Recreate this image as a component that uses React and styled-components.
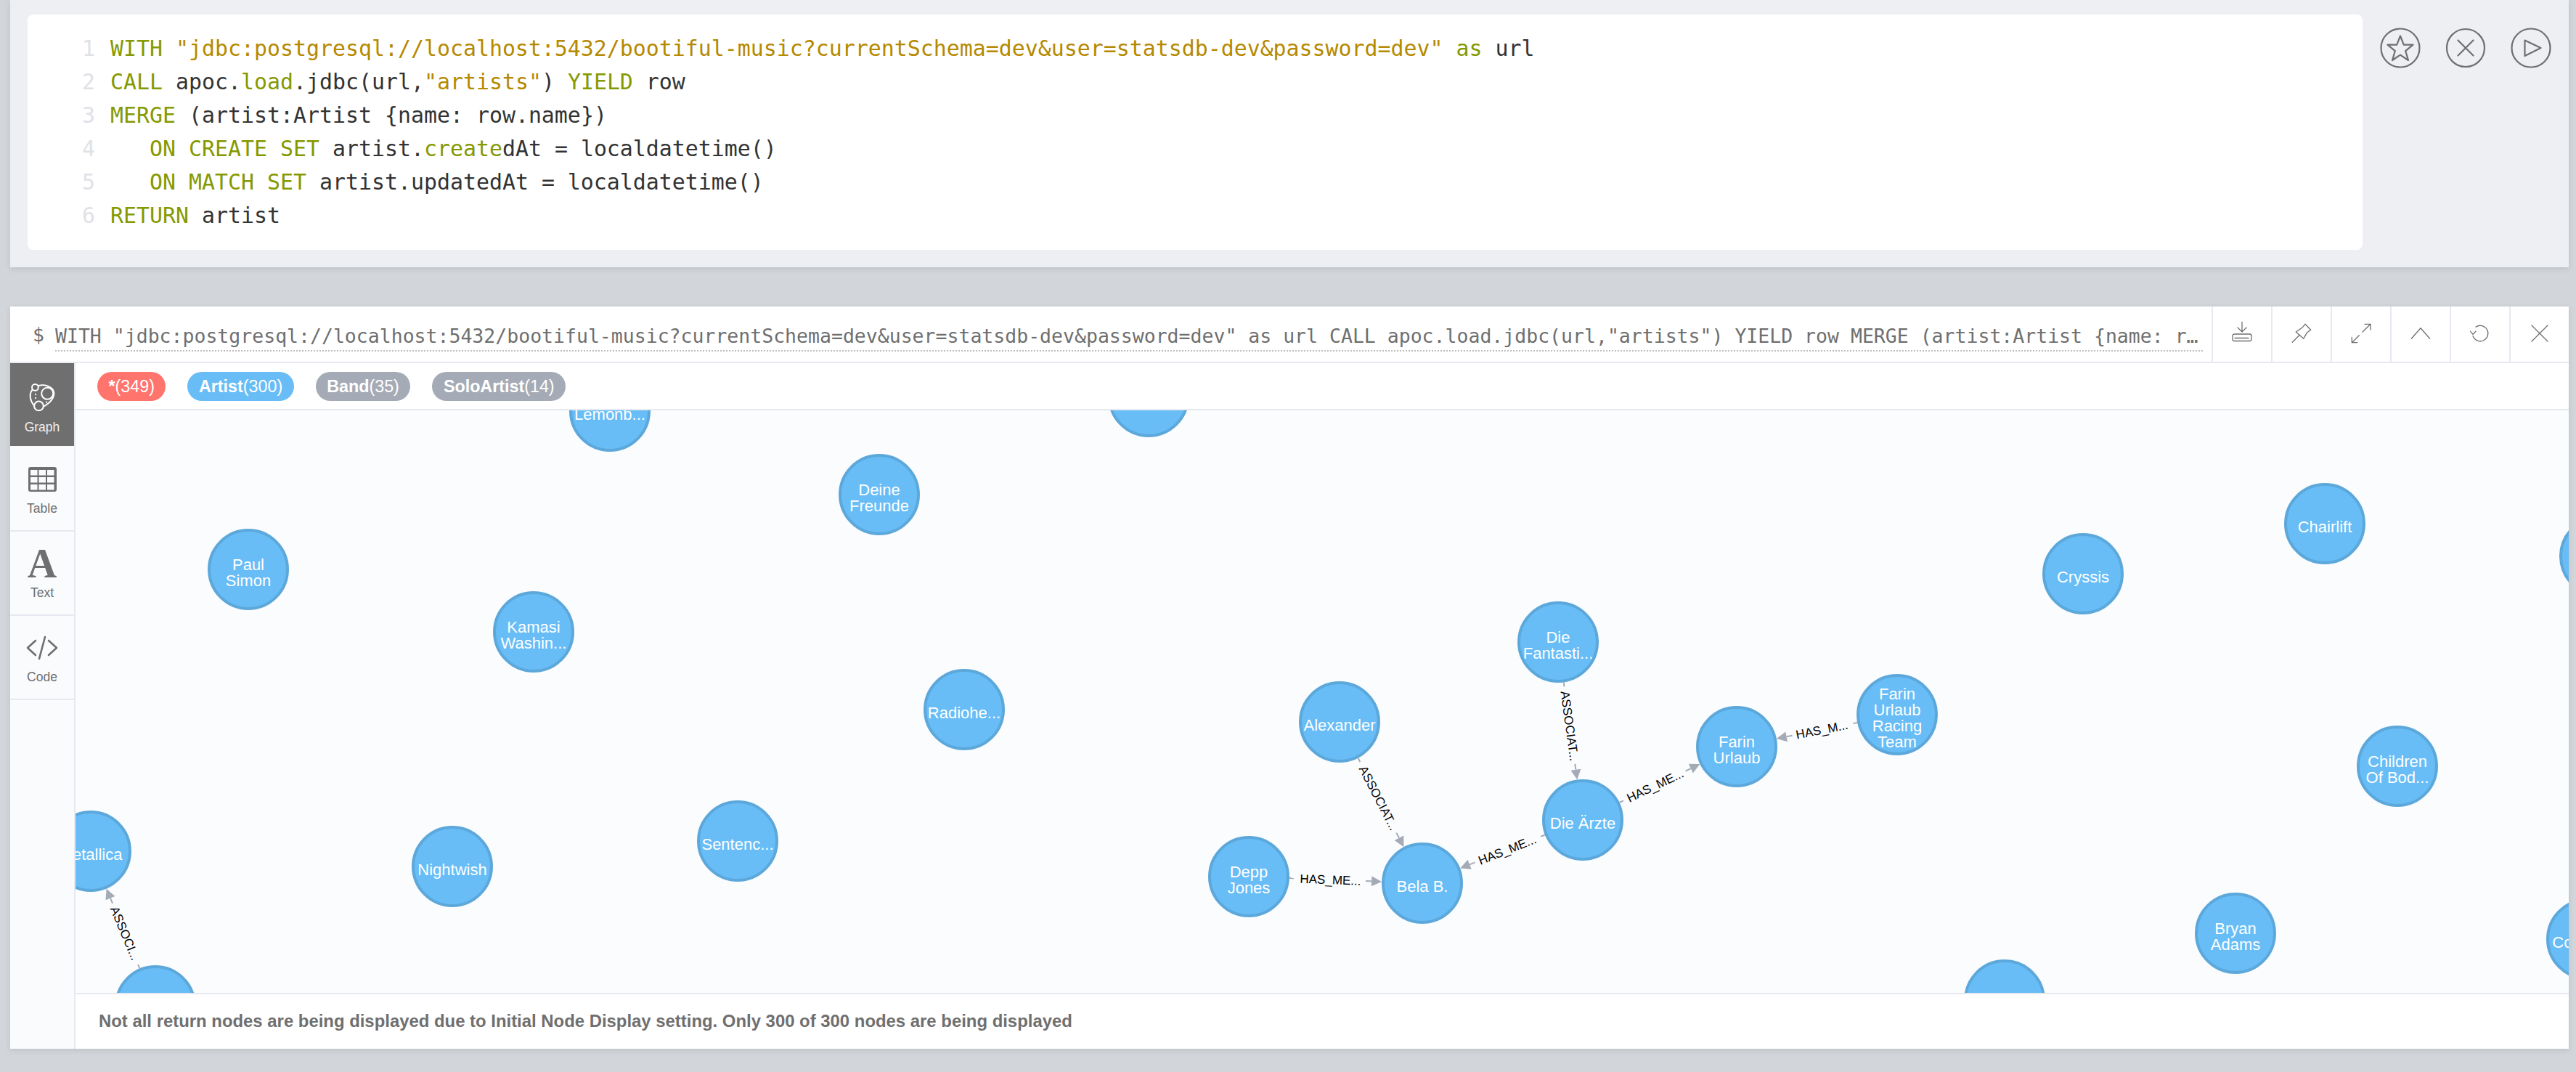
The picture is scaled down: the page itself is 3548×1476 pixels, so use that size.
import React from "react";
import styled, { createGlobalStyle } from "styled-components";

const GREY = "#6f6f6f";
const LINE = "#e6e9ef";
const MONO = `"DejaVu Sans Mono", "Liberation Mono", monospace`;
const SANS = `"Liberation Sans", Arial, sans-serif`;

const QUERY =
  'WITH "jdbc:postgresql://localhost:5432/bootiful-music?currentSchema=dev&user=statsdb-dev&password=dev" as url CALL apoc.load.jdbc(url,"artists") YIELD row MERGE (artist:Artist {name: row.name}) ON CREATE SET artist.createdAt = localdatetime() ON MATCH SET artist.updatedAt = localdatetime() RETURN artist';

const NODES = {
  lemon: { x: 840, y: 566, lines: ["Lemonb..."] },
  top: { x: 1582, y: 546, lines: [] },
  deine: { x: 1211, y: 681, lines: ["Deine", "Freunde"] },
  paul: { x: 342, y: 784, lines: ["Paul", "Simon"] },
  kamasi: { x: 735, y: 870, lines: ["Kamasi", "Washin..."] },
  radio: { x: 1328, y: 977, lines: ["Radiohe..."] },
  metallica: { x: 125, y: 1172, lines: ["Metallica"] },
  nightwish: { x: 623, y: 1193, lines: ["Nightwish"] },
  sentenc: { x: 1016, y: 1158, lines: ["Sentenc..."] },
  bottomLeft: { x: 214, y: 1385, lines: [] },
  alexander: { x: 1845, y: 994, lines: ["Alexander"] },
  depp: { x: 1720, y: 1207, lines: ["Depp", "Jones"] },
  bela: { x: 1959, y: 1216, lines: ["Bela B."] },
  fantasti: { x: 2146, y: 884, lines: ["Die", "Fantasti..."] },
  aerzte: { x: 2180, y: 1129, lines: ["Die Ärzte"] },
  farin: { x: 2392, y: 1028, lines: ["Farin", "Urlaub"] },
  racing: { x: 2613, y: 984, lines: ["Farin", "Urlaub", "Racing", "Team"] },
  cryssis: { x: 2869, y: 790, lines: ["Cryssis"] },
  chairlift: { x: 3202, y: 721, lines: ["Chairlift"] },
  children: { x: 3302, y: 1055, lines: ["Children", "Of Bod..."] },
  bryan: { x: 3079, y: 1285, lines: ["Bryan", "Adams"] },
  bottomMid: { x: 2761, y: 1377, lines: [] },
  converge: { x: 3563, y: 1293, lines: ["Converge"] },
  edge: { x: 3581, y: 766, lines: [] },
};

const EDGES = [
  { from: "alexander", to: "bela", label: "ASSOCIAT..." },
  { from: "fantasti", to: "aerzte", label: "ASSOCIAT..." },
  { from: "depp", to: "bela", label: "HAS_ME..." },
  { from: "aerzte", to: "bela", label: "HAS_ME..." },
  { from: "aerzte", to: "farin", label: "HAS_ME..." },
  { from: "racing", to: "farin", label: "HAS_M..." },
  { from: "bottomLeft", to: "metallica", label: "ASSOCI..." },
];

const GlobalStyle = createGlobalStyle`
  html, body {
    margin: 0;
    padding: 0;
    background: #d2d5da;
  }
  body {
    font-family: ${SANS};
  }
`;

const Stream = styled.div`
  width: 3548px;
  height: 1476px;
  padding: 0 10px 0 14px;
  box-sizing: border-box;
  overflow: hidden;
`;

const Editor = styled.section`
  display: flex;
  align-items: flex-start;
  height: 368px;
  padding: 20px 0 0 24px;
  box-sizing: border-box;
  background: #eeeff3;
  box-shadow: 0 2px 8px rgba(0, 0, 0, 0.1);
`;

const CodeCard = styled.div`
  width: 3216px;
  height: 324px;
  padding-top: 24px;
  box-sizing: border-box;
  background: #fff;
  border-radius: 8px;
  font-family: ${MONO};
  font-size: 29.9px;
  line-height: 46px;
  color: #333;
`;

const CodeLine = styled.div`
  display: flex;
  height: 46px;
`;

const LineNo = styled.span`
  width: 93px;
  margin-right: 21px;
  text-align: right;
  color: #dfe1e6;
`;

const Code = styled.span`
  white-space: pre;
`;

const Kw = styled.span`
  color: #859900;
`;

const Str = styled.span`
  color: #b58900;
`;

const EditorActions = styled.div`
  display: flex;
  gap: 34px;
  margin: 18px 0 0 24px;
`;

const RoundIcon = styled.svg`
  display: block;
  width: 56px;
  height: 56px;
  fill: none;
  stroke: ${GREY};
  stroke-width: 2.2;
  stroke-linejoin: round;
  stroke-linecap: round;
`;

const Frame = styled.section`
  display: flex;
  flex-direction: column;
  height: 1022px;
  margin-top: 54px;
  background: #fff;
  box-shadow: 0 2px 8px rgba(0, 0, 0, 0.1);
`;

const FrameHeader = styled.header`
  display: flex;
  height: 78px;
  flex: none;
  box-sizing: border-box;
  border-bottom: 2px solid ${LINE};
  color: ${GREY};
  font-family: ${MONO};
  font-size: 26.5px;
`;

const Dollar = styled.span`
  flex: none;
  width: 31px;
  margin-left: 31px;
  line-height: 78px;
  height: 76px;
`;

const Query = styled.div`
  flex: 1;
  min-width: 0;
  height: 39px;
  margin: 21px 12px 0 0;
  line-height: 40px;
  border-bottom: 2px dotted #bdbdbd;
  white-space: nowrap;
  overflow: hidden;
  text-overflow: ellipsis;
`;

const HeaderButton = styled.div`
  display: flex;
  align-items: center;
  justify-content: center;
  flex: none;
  width: 80px;
  border-left: 2px solid ${LINE};
  padding-bottom: 2px;
`;

const ThinIcon = styled.svg`
  display: block;
  width: 40px;
  height: 40px;
  fill: none;
  stroke: ${GREY};
  stroke-width: 1.3;
  stroke-linejoin: round;
  stroke-linecap: round;
`;

const FrameBody = styled.div`
  display: flex;
  flex: 1;
  min-height: 0;
`;

const Sidebar = styled.nav`
  flex: none;
  width: 90px;
  box-sizing: border-box;
  background: #f9fbfd;
  border-right: 2px solid ${LINE};
`;

const SideItem = styled.div`
  height: 116px;
  box-sizing: border-box;
  padding-top: 22px;
  text-align: center;
  font-size: 17.5px;
  line-height: 20px;
  color: ${({ $active }) => ($active ? "#f0f0f0" : GREY)};
  background: ${({ $active }) => ($active ? GREY : "transparent")};
  border-bottom: 2px solid ${({ $active }) => ($active ? "#f9fbfd" : LINE)};
`;

const IconSlot = styled.div`
  display: flex;
  align-items: center;
  justify-content: center;
  height: ${({ $tall }) => ($tall ? 48 : 44)}px;
  margin-bottom: 8px;
`;

const SerifA = styled.span`
  font-family: "Liberation Serif", serif;
  font-weight: 700;
  font-size: 56px;
  line-height: 44px;
  color: ${GREY};
`;

const Main = styled.div`
  display: flex;
  flex-direction: column;
  flex: 1;
  min-width: 0;
`;

const Legend = styled.div`
  display: flex;
  gap: 30px;
  flex: none;
  height: 65px;
  padding: 12px 0 0 30px;
  box-sizing: border-box;
  border-bottom: 2px solid ${LINE};
`;

const Pill = styled.span`
  height: 40px;
  padding: 0 15.5px;
  border-radius: 20px;
  background: ${({ $color }) => $color};
  color: #fff;
  font-size: 23.3px;
  line-height: 40px;
`;

const PillName = styled.b`
  font-weight: 700;
`;

const Canvas = styled.div`
  flex: 1;
  min-height: 0;
  background: #fbfcfe;
  overflow: hidden;
`;

const GraphSvg = styled.svg`
  display: block;
  font-family: ${SANS};
`;

const Footer = styled.footer`
  flex: none;
  height: 77px;
  padding-left: 32px;
  box-sizing: border-box;
  border-top: 2px solid ${LINE};
  color: ${GREY};
  font-size: 23.9px;
  font-weight: 700;
  line-height: 74px;
`;

const R = 56;
const HEAD = 14;

const Node = ({ x, y, lines }) => (
  <g>
    <circle cx={x} cy={y} r={R - 2} fill="#68bdf6" stroke="#5ca8db" strokeWidth="4" />
    <text x={x} textAnchor="middle" fontSize="22" fill="#fff">
      {lines.map((line, i) => (
        <tspan key={i} x={x} y={y + 12 - 11 * (lines.length - 1) + 22 * i}>
          {line}
        </tspan>
      ))}
    </text>
  </g>
);

const Edge = ({ from, to, label }) => {
  const a = NODES[from];
  const b = NODES[to];
  const dist = Math.hypot(b.x - a.x, b.y - a.y);
  const ux = (b.x - a.x) / dist;
  const uy = (b.y - a.y) / dist;
  const sx = a.x + ux * R;
  const sy = a.y + uy * R;
  const tx = b.x - ux * R;
  const ty = b.y - uy * R;
  const bx = tx - ux * HEAD;
  const by = ty - uy * HEAD;
  const cx = (sx + bx) / 2;
  const cy = (sy + by) / 2;
  let angle = (Math.atan2(uy, ux) * 180) / Math.PI;
  if (ux < 0) angle += 180;
  return (
    <g>
      <line x1={sx} y1={sy} x2={sx + ux * 6} y2={sy + uy * 6} stroke="#a5abb6" strokeWidth="2" />
      <line x1={bx - ux * 8} y1={by - uy * 8} x2={bx} y2={by} stroke="#a5abb6" strokeWidth="2" />
      <polygon
        points={`${tx},${ty} ${bx - uy * 7},${by + ux * 7} ${bx + uy * 7},${by - ux * 7}`}
        fill="#a5abb6"
      />
      <text
        x={cx}
        y={cy + 6}
        textAnchor="middle"
        fontSize="17"
        fill="#000"
        transform={`rotate(${angle} ${cx} ${cy})`}
      >
        {label}
      </text>
    </g>
  );
};

const GraphIcon = () => (
  <svg width="37" height="41" viewBox="78 75 110 122" fill="none" stroke="#fff" strokeWidth="6" strokeLinecap="round">
    <circle cx="103" cy="97" r="13" />
    <circle cx="153" cy="122" r="24" />
    <circle cx="118" cy="173" r="19" />
    <path d="M117 90C140 84 175 92 180 118C182 140 165 160 137 176" />
    <path d="M99 172C88 158 80 140 84 122C85 116 88 111 92 106" />
    <path d="M105 125v1M105 140v1M150 157v1" />
  </svg>
);

const TableIcon = () => (
  <svg width="39" height="34" viewBox="0 0 39 34">
    <rect width="39" height="34" rx="3" fill={GREY} />
    {[3, 14.5, 26].map((x) =>
      [4, 14, 24].map((y) => <rect key={`${x}-${y}`} x={x} y={y} width="9.5" height="7.5" fill="#f9fbfd" />)
    )}
  </svg>
);

const CodeIcon = () => (
  <svg width="44" height="34" viewBox="0 0 44 34" fill="none" stroke={GREY} strokeWidth="2.6" strokeLinecap="round" strokeLinejoin="round">
    <path d="M13 7L2 17L13 27M31 7L42 17L31 27M26 2L18 32" />
  </svg>
);

const App = () => {
  return (
    <Stream>
      <GlobalStyle />
      <Editor>
        <CodeCard>
          <CodeLine>
            <LineNo>1</LineNo>
            <Code>
              <Kw>WITH</Kw>{" "}
              <Str>"jdbc:postgresql://localhost:5432/bootiful-music?currentSchema=dev&amp;user=statsdb-dev&amp;password=dev"</Str>{" "}
              <Kw>as</Kw> url
            </Code>
          </CodeLine>
          <CodeLine>
            <LineNo>2</LineNo>
            <Code>
              <Kw>CALL</Kw> apoc.<Kw>load</Kw>.jdbc(url,<Str>"artists"</Str>) <Kw>YIELD</Kw> row
            </Code>
          </CodeLine>
          <CodeLine>
            <LineNo>3</LineNo>
            <Code>
              <Kw>MERGE</Kw> (artist:Artist {"{"}name: row.name{"}"})
            </Code>
          </CodeLine>
          <CodeLine>
            <LineNo>4</LineNo>
            <Code>
              {"   "}
              <Kw>ON CREATE SET</Kw> artist.<Kw>create</Kw>dAt = localdatetime()
            </Code>
          </CodeLine>
          <CodeLine>
            <LineNo>5</LineNo>
            <Code>
              {"   "}
              <Kw>ON MATCH SET</Kw> artist.updatedAt = localdatetime()
            </Code>
          </CodeLine>
          <CodeLine>
            <LineNo>6</LineNo>
            <Code>
              <Kw>RETURN</Kw> artist
            </Code>
          </CodeLine>
        </CodeCard>
        <EditorActions>
          <RoundIcon viewBox="-28 -28 56 56">
            <circle r="26.5" />
            <path d="M0 -16.5L4.8 -4.4L17.5 -4.4L7.2 4.2L11 17L0 9.6L-11 17L-7.2 4.2L-17.5 -4.4L-4.8 -4.4Z" />
          </RoundIcon>
          <RoundIcon viewBox="-28 -28 56 56">
            <circle r="26" />
            <path d="M-10.5 -10.5L10.5 10.5M10.5 -10.5L-10.5 10.5" />
          </RoundIcon>
          <RoundIcon viewBox="-28 -28 56 56">
            <circle r="26.5" />
            <path d="M-8.5 -10.5L13.5 0L-8.5 11Z" />
          </RoundIcon>
        </EditorActions>
      </Editor>

      <Frame>
        <FrameHeader>
          <Dollar>$</Dollar>
          <Query>{QUERY}</Query>
          <HeaderButton>
            <ThinIcon viewBox="-20 -20 40 40">
              <path d="M0 -15.5V-2M-6 -8L0 -2L6 -8" />
              <rect x="-13" y="1" width="26" height="9.5" rx="2.5" />
              <path d="M-10 6.5H9" />
            </ThinIcon>
          </HeaderButton>
          <HeaderButton>
            <ThinIcon viewBox="-20 -20 40 40">
              <path d="M5 -12.7L12.7 -4.7L7.7 -1.3L2.7 7.3L-7.7 -2L0.7 -7.7Z" />
              <path d="M-12.7 12.3L-2.7 2.3" />
            </ThinIcon>
          </HeaderButton>
          <HeaderButton>
            <ThinIcon viewBox="-20 -20 40 40">
              <path d="M2 -2L13 -12.7M5 -12.7H13V-5" />
              <path d="M-2.7 2.7L-12.7 12.7M-12.7 5.3V12.7H-5.3" />
            </ThinIcon>
          </HeaderButton>
          <HeaderButton>
            <ThinIcon viewBox="-20 -20 40 40">
              <path d="M-12.7 7.3L0 -7.3L12.7 7.3" />
            </ThinIcon>
          </HeaderButton>
          <HeaderButton>
            <ThinIcon viewBox="-20 -20 40 40">
              <path d="M-6 -8.8A10.7 10.7 0 1 1 -10 3.5" />
              <path d="M-13.3 -2.7L-10 1.3L-6 -2.7" />
            </ThinIcon>
          </HeaderButton>
          <HeaderButton>
            <ThinIcon viewBox="-20 -20 40 40">
              <path d="M-11 -11L11 11M11 -11L-11 11" />
            </ThinIcon>
          </HeaderButton>
        </FrameHeader>
        <FrameBody>
          <Sidebar>
            <SideItem $active>
              <IconSlot $tall>
                <GraphIcon />
              </IconSlot>
              Graph
            </SideItem>
            <SideItem>
              <IconSlot>
                <TableIcon />
              </IconSlot>
              Table
            </SideItem>
            <SideItem>
              <IconSlot>
                <SerifA>A</SerifA>
              </IconSlot>
              Text
            </SideItem>
            <SideItem>
              <IconSlot>
                <CodeIcon />
              </IconSlot>
              Code
            </SideItem>
          </Sidebar>
          <Main>
            <Legend>
              <Pill $color="#ff756e">
                <PillName>*</PillName>(349)
              </Pill>
              <Pill $color="#68bdf6">
                <PillName>Artist</PillName>(300)
              </Pill>
              <Pill $color="#a5abb6">
                <PillName>Band</PillName>(35)
              </Pill>
              <Pill $color="#a5abb6">
                <PillName>SoloArtist</PillName>(14)
              </Pill>
            </Legend>
            <Canvas>
              <GraphSvg width="3434" height="802" viewBox="104 565 3434 802">
                {Object.keys(NODES).map((key) => (
                  <Node key={key} {...NODES[key]} />
                ))}
                {EDGES.map((edge) => (
                  <Edge key={`${edge.from}-${edge.to}`} {...edge} />
                ))}
              </GraphSvg>
            </Canvas>
            <Footer>
              Not all return nodes are being displayed due to Initial Node Display setting. Only 300 of 300 nodes are
              being displayed
            </Footer>
          </Main>
        </FrameBody>
      </Frame>
    </Stream>
  );
};

export default App;
